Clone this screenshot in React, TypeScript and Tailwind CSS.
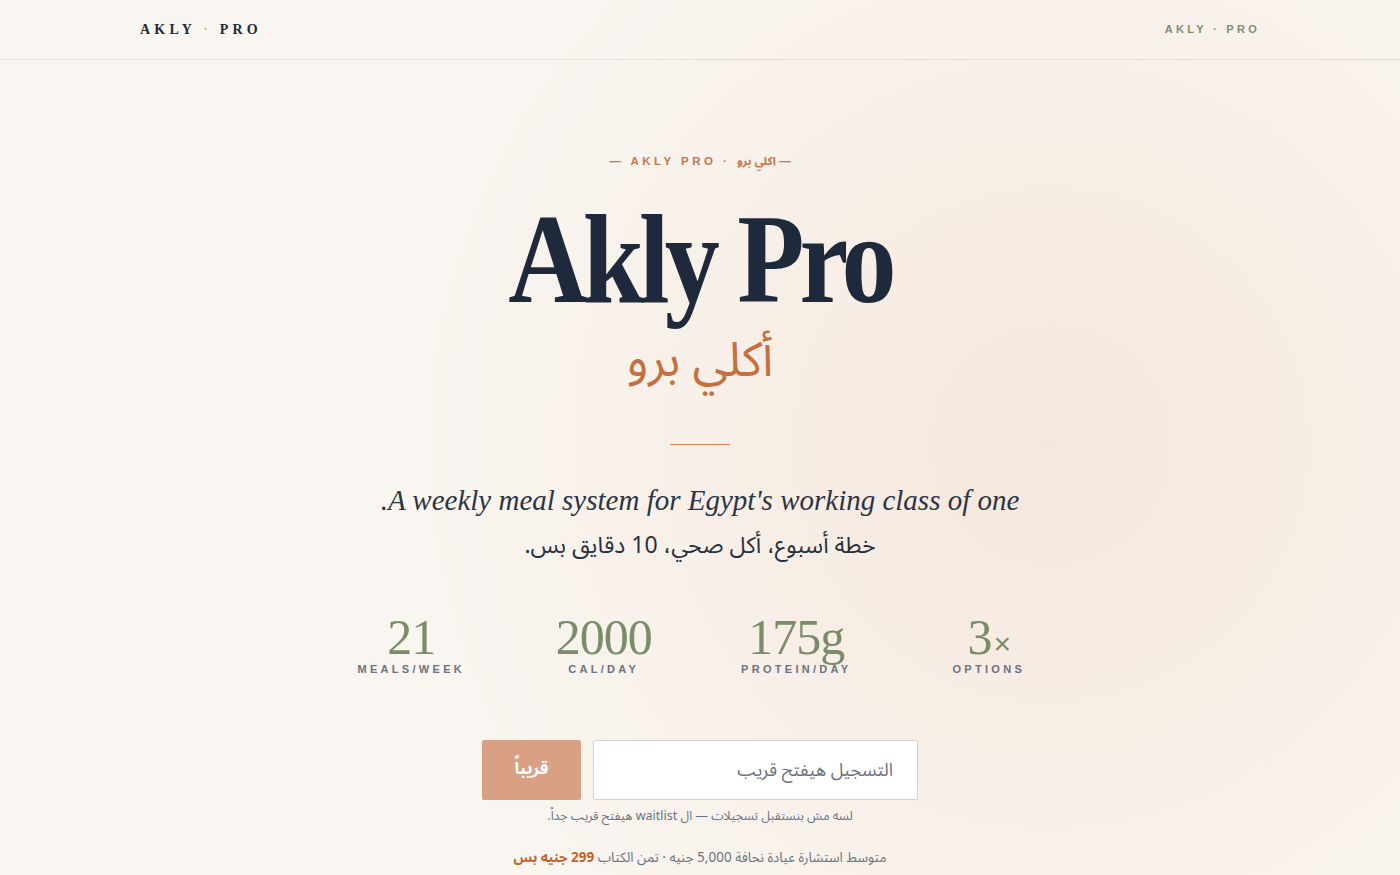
import React from "react";

const STATS = [
  { value: "21", label: "MEALS/WEEK" },
  { value: "2000", label: "CAL/DAY" },
  { value: "175g", label: "PROTEIN/DAY" },
  { value: "3", suffix: "×", label: "OPTIONS" },
];

const serif = "font-['Liberation_Serif','Times_New_Roman',serif]";
const sans = "font-['Liberation_Sans','Noto_Sans',sans-serif]";
const arabic = "font-['Noto_Sans_Arabic','Noto_Sans','DejaVu_Sans',sans-serif]";

export default function App() {
  return (
    <div
      dir="rtl"
      className="min-h-screen bg-[#f9f6f1] bg-[radial-gradient(circle_730px_at_75%_49%,rgba(236,196,172,0.3),rgba(236,196,172,0.1)_55%,transparent_100%)]"
    >
      {/* === Top bar === */}
      <header dir="ltr" className="h-[60px] border-b border-[#e6e1d9]">
        <div className="mx-auto flex h-full max-w-[1120px] items-center justify-between">
          <div className={`${serif} text-[14px] font-bold tracking-[0.3em] text-[#1f2937]`}>
            AKLY <span className="text-[#d6b98e]">·</span> PRO
          </div>
          <div className={`${sans} text-[11px] font-bold tracking-[0.3em] text-[#7f8e70]`}>
            AKLY · PRO
          </div>
        </div>
      </header>

      {/* === Hero === */}
      <main className="flex flex-col items-center pb-10 pt-[93px] text-center">
        <div
          dir="ltr"
          className={`${sans} text-[11.5px] font-bold leading-4 tracking-[0.3em] text-[#c4764a]`}
        >
          — AKLY PRO · <span className={`${arabic} tracking-normal`}>اكلي برو</span> —
        </div>

        <h1
          dir="ltr"
          className={`${serif} mt-[26px] scale-x-[0.86] text-[128px] font-bold leading-none tracking-[-0.045em] text-[#1e293b]`}
        >
          Akly Pro
        </h1>
        <div className={`${arabic} mt-[13px] text-[48px] leading-[50px] text-[#c4703f]`}>
          أكلي برو
        </div>

        <div className="mt-[58px] h-px w-[60px] bg-[#d4835a]" />

        <p className={`${serif} mt-[36px] text-[29px] italic leading-[38px] text-[#2b3544]`}>
          A weekly meal system for Egypt's working class of one.
        </p>
        <p className={`${arabic} mt-[11px] text-[23px] leading-[32px] text-[#27303d]`}>
          خطة أسبوع، أكل صحي، 10 دقايق بس.
        </p>

        {/* === Stats === */}
        <div dir="ltr" className="mt-[52px] grid w-[770px] grid-cols-4">
          {STATS.map((s) => (
            <div key={s.label} className="flex flex-col items-center">
              <div className={`${serif} h-[47px] text-[50px] leading-[47px] tracking-[-0.02em] text-[#7a8c69]`}>
                {s.value}
                {s.suffix && (
                  <span className={`${sans} ml-[2px] align-baseline text-[30px] font-light leading-none`}>
                    {s.suffix}
                  </span>
                )}
              </div>
              <div className={`${sans} text-[11px] font-semibold leading-4 tracking-[0.3em] text-[#6b7280]`}>
                {s.label}
              </div>
            </div>
          ))}
        </div>

        {/* === Waitlist === */}
        <div className="mt-[63px] flex gap-3">
          <input
            disabled
            placeholder="التسجيل هيفتح قريب"
            className={`${arabic} h-[60px] w-[325px] rounded-[2px] border border-[#d6d3ce] bg-white px-6 text-[18px] text-[#374151] placeholder:text-[#6b7280]`}
          />
          <button
            disabled
            className={`${arabic} h-[60px] w-[99px] rounded-[2px] bg-[#d9a083] text-[17px] font-bold text-white`}
          >
            قريباً
          </button>
        </div>
        <p className={`${arabic} mt-[8px] text-[12.5px] leading-4 text-[#6b7280]`}>
          لسه مش بنستقبل تسجيلات — ال waitlist هيفتح قريب جداً.
        </p>
        <p className={`${arabic} mt-6 text-[13.5px] leading-5 text-[#6b7280]`}>
          متوسط استشارة عيادة نحافة 5,000 جنيه · تمن الكتاب{" "}
          <strong className="font-bold text-[#c4622d]">299 جنيه بس</strong>
        </p>
      </main>
    </div>
  );
}
